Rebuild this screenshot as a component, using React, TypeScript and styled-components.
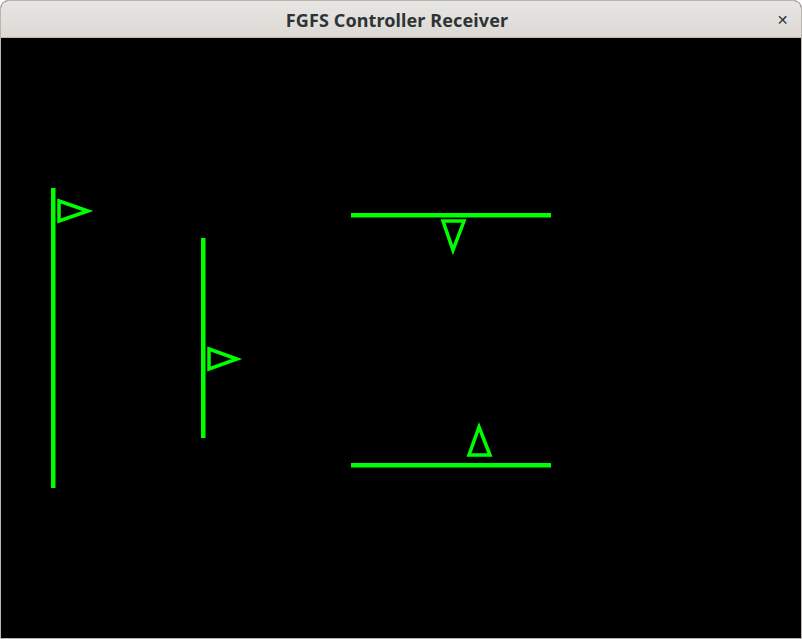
import React from "react";
import styled, { createGlobalStyle } from "styled-components";

const Global = createGlobalStyle`
  html, body { margin: 0; padding: 0; background: #ffffff; }
  #root { width: 802px; height: 639px; }
`;

const Window = styled.div`
  width: 802px;
  height: 639px;
  box-sizing: border-box;
  display: flex;
  flex-direction: column;
  border: 1px solid #b9b6b2;
  border-radius: 8px 8px 0 0;
  overflow: hidden;
  background: #000;
`;

const TitleBar = styled.div`
  height: 36px;
  flex: none;
  display: grid;
  grid-template-columns: 40px 1fr 40px;
  align-items: center;
  background: linear-gradient(#e8e6e3, #dcd9d5);
  border-bottom: 1px solid #bfbab4;
  font-family: "Noto Sans", "DejaVu Sans", sans-serif;
  color: #2e3436;
`;

const Title = styled.div`
  grid-column: 2;
  text-align: center;
  font-weight: 700;
  font-size: 18px;
  letter-spacing: 0.1px;
  padding-top: 2px;
  margin-right: 8px;
`;

const Close = styled.div`
  grid-column: 3;
  justify-self: center;
  margin-left: 3px;
  padding-top: 1px;
  font-size: 14px;
  font-weight: 900;
  color: #2e3436;
`;

const Canvas = styled.div`
  flex: 1;
  display: flex;
  background: #000;
`;

const G = "#00ff00";

type Tri = { pts: string };
const triangles: Tri[] = [
  { pts: "59,201 88,211 59,221" },
  { pts: "209,349 237,359 209,369" },
  { pts: "443,221 464,221 453,250" },
  { pts: "479,427 469,455 490,455" },
];

export default function App() {
  return (
    <>
      <Global />
      <Window>
        <TitleBar>
          <Title>FGFS Controller Receiver</Title>
          <Close>✕</Close>
        </TitleBar>
        <Canvas>
          <svg width="800" height="600" viewBox="1 38 800 600">
            <rect x="51" y="188" width="4.5" height="300" fill={G} />
            <rect x="201" y="238" width="4.5" height="200" fill={G} />
            <rect x="351" y="213" width="200" height="4.5" fill={G} />
            <rect x="351" y="463" width="200" height="4.5" fill={G} />
            {triangles.map((t, i) => (
              <polygon key={i} points={t.pts} fill="none" stroke={G} strokeWidth={3.5} />
            ))}
          </svg>
        </Canvas>
      </Window>
    </>
  );
}
